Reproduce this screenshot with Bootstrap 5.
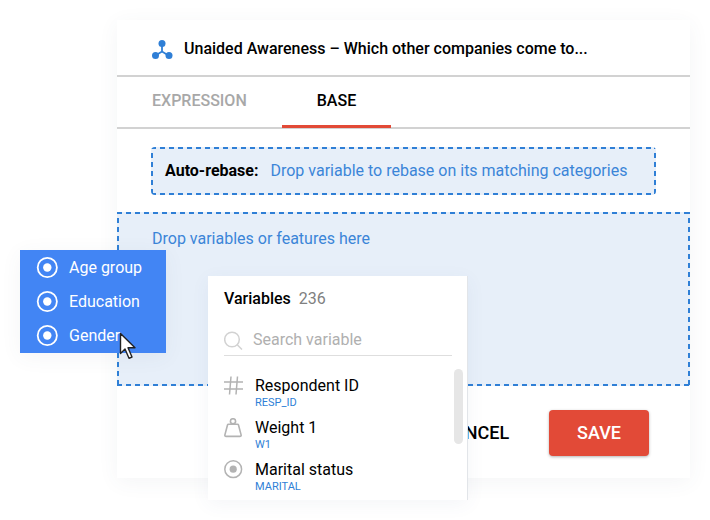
<!DOCTYPE html>
<html lang="en">
<head>
<meta charset="utf-8">
<meta name="viewport" content="width=device-width, initial-scale=1">
<title>Base variables</title>
<link href="https://cdn.jsdelivr.net/npm/bootstrap@5.3.0/dist/css/bootstrap.min.css" rel="stylesheet">
<style>
  :root { --line: #d2d2d2; --blue: #2f7fd6; --pale: #e7eff9; --red: #e24a37; }
  body { font-family: Roboto, "Liberation Sans", sans-serif; font-size: 16px; line-height: 24px; color: #000; background: #fff; }
  .stage { padding: 20px 20px 42px 117px; overflow: hidden; }
  .dialog { box-shadow: 0 4px 20px rgba(60, 90, 110, .06); }
  .dialog-head { padding: 17px 35px 14px; border-bottom: 2px solid var(--line); gap: 11px; }
  .dialog-head h1 { font-size: 16px; line-height: 24px; font-weight: 500; }
  .tabs { border-bottom: 2px solid var(--line); }
  .tabs .nav-link { color: #a8a8a8; background: none; font-weight: 500; padding: 12px 35px; border: 0; border-bottom: 3px solid transparent; margin-bottom: -1px; }
  .tabs .nav-link.active { color: #000; border-color: var(--red); }
  .dashed {
    color: #3b85d8;
    background:
      repeating-linear-gradient(90deg, var(--blue) 0 5px, transparent 5px 9px) 0 0 / 100% 2px no-repeat,
      repeating-linear-gradient(90deg, var(--blue) 0 5px, transparent 5px 9px) 0 100% / 100% 2px no-repeat,
      linear-gradient(transparent 4px, var(--blue) 4px) 0 2px / 2px 9px repeat-y,
      linear-gradient(transparent 4px, var(--blue) 4px) 100% 2px / 2px 9px repeat-y,
      var(--pale);
  }
  .rebase { margin: 18px 34px 17px; padding: 12px 14px; border-radius: 4px; gap: 12px; }
  .drop { padding: 15px 35px; min-height: 174px; }
  .foot { padding: 24px 41px 22px; gap: 40px; }
  .foot .btn { font-size: 18px; line-height: 24px; font-weight: 500; border: 0; border-radius: 4px; padding: 11px 28px; }
  .foot .btn-plain { padding: 11px 0; color: #000; }
  .foot .btn-save { background: var(--red); color: #fff; box-shadow: 0 1px 3px rgba(0, 0, 0, .3); }
  .dragged { left: 20px; top: 250px; width: 146px; background: #4285f4; color: #fff; padding: 6px 16px 5px; box-shadow: 0 4px 20px rgba(60, 90, 110, .06); }
  .dragged ul { gap: 10px; }
  .dragged li { gap: 11px; }
  .cursor { left: 99px; top: 82px; }
  .panel { left: 208px; top: 276px; width: 260px; height: 224px; padding: 11px 15px 0 16px; box-shadow: 0 4px 18px rgba(60, 90, 130, .06); border-right: 1px solid #e2e5e9; }
  .panel h2 { font-size: 16px; line-height: 24px; font-weight: 500; }
  .count { color: #808080; font-weight: 400; }
  .find { gap: 10px; padding-bottom: 3px; margin-top: 17px; border-bottom: 1px solid #dedede; }
  .find input { font-size: 16px; line-height: 24px; }
  .find input::placeholder { color: #b0b0b0; opacity: 1; }
  .vars { gap: 9px; padding-top: 20px; line-height: 20px; }
  .vars li { gap: 12px; }
  .vars .code { font-size: 11px; line-height: 13px; color: var(--blue); }
  .thumb { right: 4px; top: 93px; width: 9px; height: 75px; background: #e6e6e6; border-radius: 5px; }
  svg { flex: none; }
</style>
</head>
<body>
<main class="stage position-relative">
  <section class="dialog bg-white">
    <header class="dialog-head d-flex align-items-center">
      <svg width="21" height="21" viewBox="0 0 21 21" fill="#2f7fd6" stroke="#2f7fd6" aria-hidden="true"><path d="M10 4v8.500M3.500 16.500l6.500-4 6.500 4" fill="none" stroke-width="1.800"/><g stroke="none"><circle cx="10" cy="4.500" r="3.500"/><circle cx="3.500" cy="16.500" r="3.500"/><circle cx="17" cy="16.500" r="3.500"/></g></svg>
      <h1 class="mb-0 text-truncate">Unaided Awareness – Which other companies come to...</h1>
    </header>
    <nav class="tabs nav">
      <button type="button" class="nav-link">EXPRESSION</button>
      <button type="button" class="nav-link active" aria-current="true">BASE</button>
    </nav>
    <div class="d-flex flex-column">
      <div class="rebase dashed d-flex"><strong class="text-black">Auto-rebase:</strong><span>Drop variable to rebase on its matching categories</span></div>
      <div class="drop dashed">Drop variables or features here</div>
    </div>
    <footer class="foot d-flex justify-content-end">
      <button type="button" class="btn btn-plain">CANCEL</button>
      <button type="button" class="btn btn-save">SAVE</button>
    </footer>
  </section>

  <aside class="panel bg-white position-absolute overflow-hidden">
    <h2 class="mb-0 d-flex gap-2"><span>Variables</span><span class="count">236</span></h2>
    <label class="find d-flex align-items-center">
      <svg width="19" height="19" viewBox="0 0 19 19" fill="none" stroke="#d2d2d2" stroke-width="1.500" aria-hidden="true"><circle cx="8" cy="8.500" r="7.300"/><path d="M13 13.500l5 5"/></svg>
      <input class="form-control border-0 p-0 shadow-none bg-transparent" type="text" placeholder="Search variable" aria-label="Search variable">
    </label>
    <ul class="vars list-unstyled mb-0 d-flex flex-column">
      <li class="d-flex"><svg width="19" height="21" viewBox="0 0 19 21" fill="none" stroke="#b3b3b3" stroke-width="1.500" aria-hidden="true"><path d="M7 .5L5.500 18.500M13.500 .5L12 18.500M0 6h19M0 13h19"/></svg><div>Respondent ID<div class="code">RESP_ID</div></div></li>
      <li class="d-flex"><svg width="19" height="21" viewBox="0 0 19 21" fill="none" stroke="#b3b3b3" stroke-width="1.600" stroke-linejoin="round" aria-hidden="true"><circle cx="9" cy="3.300" r="2.600"/><path d="M4.500 6.200h9q.8 0 1 .8l2.600 9.900q.3 1.500-1.200 1.500H2.100q-1.500 0-1.200-1.500L3.500 7q.2-.8 1-.8z"/></svg><div>Weight 1<div class="code">W1</div></div></li>
      <li class="d-flex"><svg width="19" height="21" viewBox="0 0 19 21" fill="none" stroke="#b3b3b3" stroke-width="1.500" aria-hidden="true"><circle cx="9.200" cy="9.200" r="8.400"/><circle cx="9.200" cy="9.200" r="3.600" fill="#b3b3b3" stroke="none"/></svg><div>Marital status<div class="code">MARITAL</div></div></li>
    </ul>
    <div class="thumb position-absolute"></div>
  </aside>

  <div class="dragged position-absolute">
    <ul class="list-unstyled mb-0 d-flex flex-column">
      <li class="d-flex align-items-center"><svg width="22" height="22" viewBox="0 0 22 22" fill="none" stroke="#fff" stroke-width="1.800" aria-hidden="true"><circle cx="11.300" cy="10.500" r="9.600"/><circle cx="11.300" cy="10.500" r="4.200" fill="#fff" stroke="none"/></svg>Age group</li>
      <li class="d-flex align-items-center"><svg width="22" height="22" viewBox="0 0 22 22" fill="none" stroke="#fff" stroke-width="1.800" aria-hidden="true"><circle cx="11.300" cy="10.500" r="9.600"/><circle cx="11.300" cy="10.500" r="4.200" fill="#fff" stroke="none"/></svg>Education</li>
      <li class="d-flex align-items-center"><svg width="22" height="22" viewBox="0 0 22 22" fill="none" stroke="#fff" stroke-width="1.800" aria-hidden="true"><circle cx="11.300" cy="10.500" r="9.600"/><circle cx="11.300" cy="10.500" r="4.200" fill="#fff" stroke="none"/></svg>Gender</li>
    </ul>
    <svg class="cursor position-absolute" width="18" height="28" viewBox="0 0 18 28" aria-hidden="true"><path d="M1.500 1.500v20l4.500-4.500 4 9.300 3-1.300-4-9.200h7z" fill="#fff" stroke="#222" stroke-width="1.400" stroke-linejoin="round"/></svg>
  </div>
</main>
<script src="https://cdn.jsdelivr.net/npm/bootstrap@5.3.0/dist/js/bootstrap.bundle.min.js"></script>
</body>
</html>
